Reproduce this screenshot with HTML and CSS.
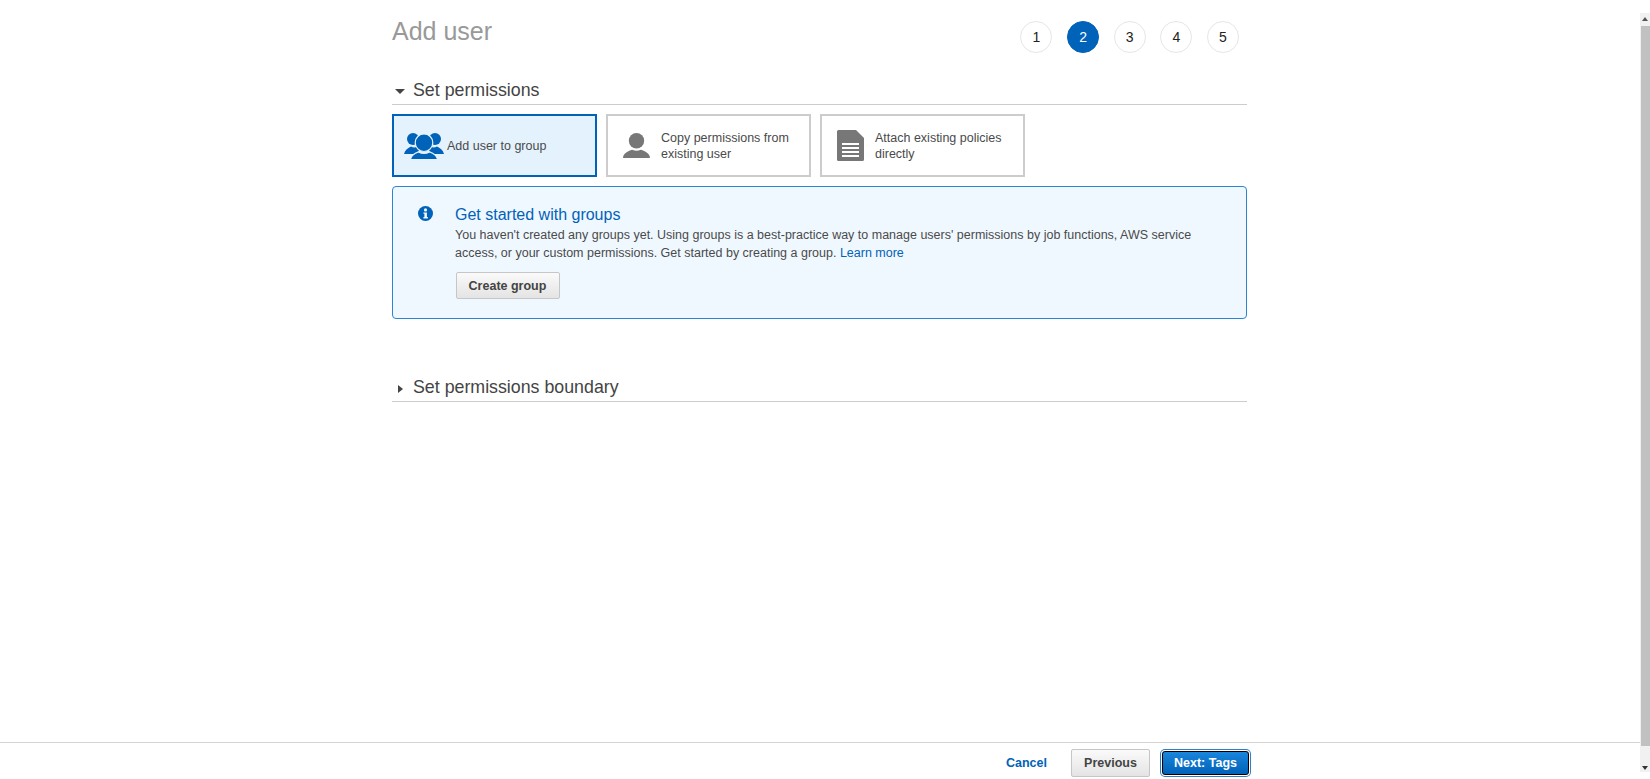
FILE: index.html
```html
<!DOCTYPE html>
<html lang="en">
<head>
<meta charset="utf-8">
<title>Add user</title>
<link rel="stylesheet" href="styles.css">
</head>
<body>
<div class="page">
  <div class="main">
    <main class="content">
      <header class="top">
        <h1 class="title">Add user</h1>
        <ol class="steps">
          <li class="step">1</li>
          <li class="step step-active">2</li>
          <li class="step">3</li>
          <li class="step">4</li>
          <li class="step">5</li>
        </ol>
      </header>

      <section>
        <h2 class="section-head"><span class="caret caret-down"></span>Set permissions</h2>
        <div class="cards">
          <div class="card card-active">
            <svg class="icon-group" viewBox="0 0 40 26" width="40" height="26">
              <g fill="#0062b8">
                <circle cx="9" cy="6" r="6"/>
                <circle cx="31" cy="6" r="6"/>
                <path d="M0 21c1-4 4-6 7-7.500 1.600 1 4 1.300 6 .5l2 4-4 3z"/>
                <path d="M40 21c-1-4-4-6-7-7.500-1.600 1-4 1.300-6 .5l-2 4 4 3z"/>
              </g>
              <g fill="#0062b8" stroke="#e4f2fd" stroke-width="1.200">
                <circle cx="20" cy="9.700" r="8.800"/>
                <path d="M6.500 26.500c.6-4.400 4.200-6.300 8-7.600 3.400 1.800 7.600 1.800 11 0 3.800 1.300 7.400 3.200 8 7.600z"/>
              </g>
            </svg>
            <span class="card-label">Add user to group</span>
          </div>
          <div class="card">
            <svg class="icon-user" viewBox="0 0 28 26" width="27" height="25">
              <circle cx="14" cy="8" r="8" fill="#777"/>
              <path d="M0 26c0-5 5-7 9.500-8.600 3 1.400 6 1.400 9 0C23 19 28 21 28 26z" fill="#777"/>
            </svg>
            <span class="card-label">Copy permissions from existing user</span>
          </div>
          <div class="card">
            <svg class="icon-doc" viewBox="0 0 27 31" width="27" height="31">
              <path d="M1.500 0H19l8 8v21.500a1.500 1.500 0 0 1-1.500 1.500h-24A1.500 1.500 0 0 1 0 29.500v-28A1.500 1.500 0 0 1 1.500 0z" fill="#777"/>
              <g fill="#fff">
                <rect x="5" y="13" width="17" height="2"/>
                <rect x="5" y="17" width="17" height="2"/>
                <rect x="5" y="21" width="17" height="2"/>
                <rect x="5" y="25" width="17" height="2"/>
              </g>
            </svg>
            <span class="card-label">Attach existing policies directly</span>
          </div>
        </div>
        <div class="notice">
          <svg class="icon-info" viewBox="0 0 16 16" width="15" height="15">
            <circle cx="8" cy="8" r="8" fill="#0062b8"/>
            <circle cx="8" cy="4.200" r="1.700" fill="#f0f8fe"/>
            <path d="M5.800 6.800h3.700v5h1v1.500H5.800v-1.500h1v-3.500h-1z" fill="#f0f8fe"/>
          </svg>
          <div class="notice-body">
            <h3 class="notice-title">Get started with groups</h3>
            <p class="notice-text">You haven't created any groups yet. Using groups is a best-practice way to manage users' permissions by job functions, AWS service access, or your custom permissions. Get started by creating a group. <a class="link" href="#">Learn more</a></p>
            <button class="btn btn-create" type="button">Create group</button>
          </div>
        </div>
      </section>

      <section class="boundary">
        <h2 class="section-head"><span class="caret caret-right"></span>Set permissions boundary</h2>
      </section>
    </main>

    <footer class="footer">
      <div class="footer-inner">
        <a class="cancel" href="#">Cancel</a>
        <button class="btn btn-prev" type="button">Previous</button>
        <button class="btn btn-next" type="button">Next: Tags</button>
      </div>
    </footer>
  </div>

  <div class="scrollbar">
    <div class="track">
      <span class="arrow arrow-up"></span>
      <div class="thumb"></div>
      <span class="arrow arrow-down"></span>
    </div>
  </div>
</div>
</body>
</html>
```

FILE: styles.css
```css
* { box-sizing: border-box; }
html, body { height: 100%; }
body {
  margin: 0;
  overflow: hidden;
  background: #fff;
  color: #444;
  font-family: "Liberation Sans", Arial, sans-serif;
  font-size: 12.500px;
}
.page { display: flex; height: 779px; }
.main { flex: 1; min-width: 0; display: flex; flex-direction: column; }
.content { flex: 1; width: 855px; margin-left: 392px; }

.top { display: flex; justify-content: space-between; height: 73px; }
.title {
  margin: 15px 0 0;
  font-size: 25px;
  line-height: 32px;
  font-weight: 400;
  color: #999;
}
.steps {
  list-style: none;
  display: flex;
  gap: 15.670px;
  margin: 21px 9px 0 0;
  padding: 0;
}
.step {
  width: 32px;
  height: 32px;
  margin-right: -1px;
  border: 1px solid #e6e6e6;
  border-radius: 50%;
  display: flex;
  align-items: center;
  justify-content: center;
  color: #222;
  font-size: 14px;
}
.step-active { background: #0062b8; border-color: #0062b8; color: #fff; }

.section-head {
  margin: 0;
  height: 32px;
  padding-top: 4px;
  display: flex;
  align-items: center;
  border-bottom: 1px solid #ccc;
  font-size: 17.800px;
  font-weight: 400;
  color: #444;
}
.caret { width: 0; height: 0; flex: none; border-style: solid; border-color: transparent; }
.caret-down { margin: 2px 8px 0 3px; border-width: 5px 5px 0; border-top-color: #444; }
.caret-right { margin: 2px 10px 0 6px; border-width: 4.500px 0 4.500px 5px; border-left-color: #444; }

.cards { display: flex; gap: 9px; margin-top: 9px; }
.card {
  width: 205px;
  height: 63px;
  display: flex;
  align-items: center;
  border: 2px solid #ccc;
  background: #fff;
  padding-left: 15px;
  line-height: 16px;
  color: #4a4a4a;
}
.card-active { border-color: #0062b8; background: #e4f2fd; padding-left: 10px; }
.card .icon-user { margin-right: 11px; flex: none; }
.card .icon-doc { margin-right: 11px; flex: none; }
.card .icon-group { margin-right: 3px; flex: none; }
.card-label { width: 135px; }

.notice {
  display: flex;
  margin-top: 9px;
  height: 132.500px;
  padding: 19px 20px 0 25px;
  background: #f0f8ff;
  border: 1px solid #2d84d0;
  border-radius: 4px;
}
.icon-info { flex: none; margin-right: 22px; }
.notice-body { min-width: 0; }
.notice-title {
  margin: 0;
  font-size: 16px;
  line-height: 18px;
  font-weight: 400;
  color: #0062b8;
}
.notice-text { margin: 2px 0 0; line-height: 18px; color: #4a4a4a; }
.link { color: #0062b8; text-decoration: none; }

.btn {
  font-family: inherit;
  font-size: 12.500px;
  font-weight: 700;
  height: 27px;
  border-radius: 2px;
  border: 1px solid #c6c6c6;
  background: linear-gradient(#fafafa, #e4e4e4);
  color: #444;
  padding: 0;
}
.btn-create { width: 104px; margin: 10px 0 0 .5px; display: block; }

.boundary { margin-top: 51.500px; }

.footer { height: 37px; border-top: 1px solid #d5d5d5; margin-top: -1px; }
.footer-inner {
  display: flex;
  align-items: center;
  justify-content: flex-end;
  height: 100%;
  padding: 5px 389px 1px 0;
}
.cancel { color: #0062b8; font-weight: 700; font-size: 12.500px; text-decoration: none; margin-right: 24px; }
.btn-prev { width: 79px; height: 28px; margin-right: 10px; }
.btn-next {
  width: 87px;
  height: 24px;
  margin: 0 2px;
  background: linear-gradient(#1a86dc, #0062b8);
  color: #fff;
  border: 1px solid #000;
  box-shadow: 0 0 0 1px #fff, 0 0 0 2px #2f7fc4;
  border-radius: 3px;
}

.scrollbar { flex: none; width: 10px; height: 100%; padding: 13px 0 7px; }
.track {
  height: 100%;
  background: #f1f1f1;
  display: flex;
  flex-direction: column;
  align-items: center;
  position: relative;
}
.thumb { position: absolute; top: 13px; bottom: 26px; left: 1px; right: 0; background: #c1c1c1; }
.arrow { position: absolute; left: 2px; width: 0; height: 0; border-style: solid; border-color: transparent; }
.arrow-up { top: 4px; border-width: 0 3.500px 4px; border-bottom-color: #555; }
.arrow-down { bottom: 2px; border-width: 4px 3.500px 0; border-top-color: #333; }
```
